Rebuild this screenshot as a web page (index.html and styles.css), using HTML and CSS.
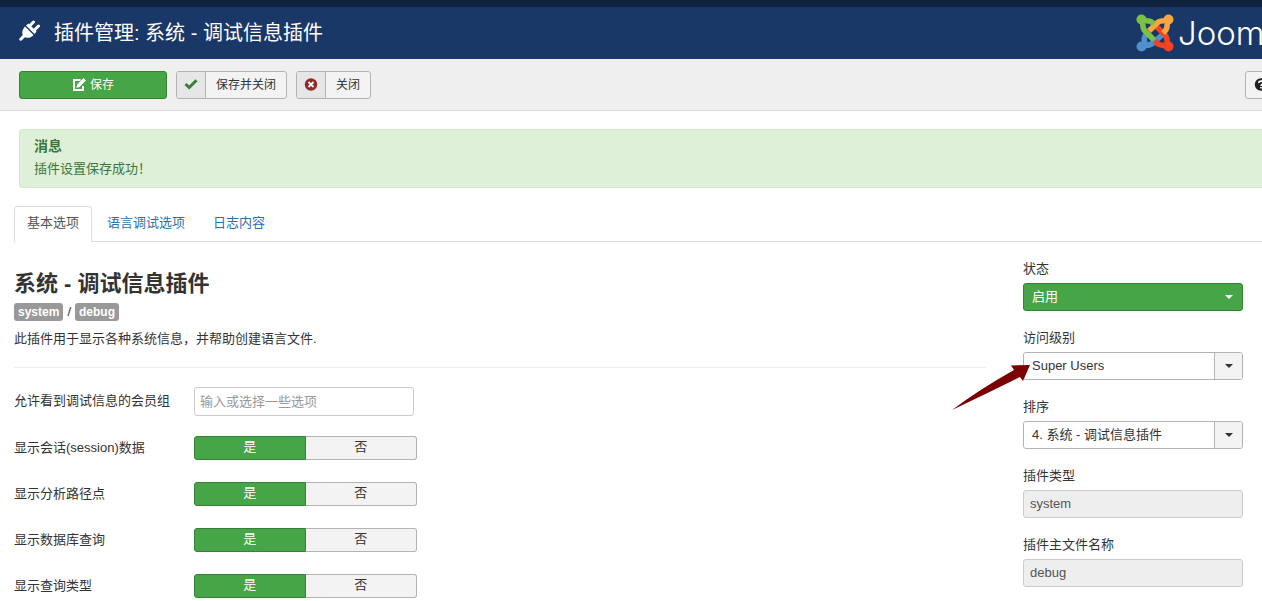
FILE: index.html
```html
<!DOCTYPE html>
<html lang="zh-CN">
<head>
<meta charset="utf-8">
<title>插件管理: 系统 - 调试信息插件</title>
<link rel="stylesheet" href="styles.css">
</head>
<body>
<div class="topbar"></div>
<header class="header">
  <svg class="plug" viewBox="0 0 22 22" aria-hidden="true">
    <path d="M7 6.500 15.500 15c-2 2.500-5.500 3.700-8.500 2.200L3.500 20.500c-1.200 1-3-.8-2-2L4.700 15C3.500 12 4.800 9 7 6.500Z" fill="#fff"/>
    <path d="M8 5.500 10.500 3.500 18.500 11.500 16.500 14Z" fill="#fff"/>
    <path d="M12 5.500 15.500 2M16.500 10l4-4" stroke="#fff" stroke-width="3" stroke-linecap="round"/>
  </svg>
  <h1 class="page-title">插件管理: 系统 - 调试信息插件</h1>
  <div class="brand">
    <svg class="brand-mark" viewBox="0 0 38 38" aria-hidden="true">
      <g fill="none" stroke-width="5.600">
        <path d="M6 31 9 29Q7 24 10 21l2-2M7 31q7 1 10-2l9-8" stroke="#5091cd"/>
        <path d="M31 32q1-8-2-11l-9-9M32 31q-7 1-10-1l-3-3" stroke="#f44321"/>
        <path d="M31 6q1 8-2 11l-2 2M32 7q-8-1-11 2l-8 8" stroke="#f9a541"/>
        <path d="M7 6q-1 8 2 11l9 9M6 7q8-1 11 2l1 1" stroke="#7ac143"/>
      </g>
      <circle cx="5.500" cy="5.500" r="5" fill="#7ac143"/>
      <circle cx="32.500" cy="5.500" r="5" fill="#f9a541"/>
      <circle cx="5.500" cy="32.500" r="5" fill="#5091cd"/>
      <circle cx="32.500" cy="32.500" r="5" fill="#f44321"/>
    </svg>
    <span class="brand-name">Joomla!</span>
  </div>
</header>

<div class="toolbar">
  <button class="btn btn-save" type="button">
    <svg class="icon" viewBox="0 0 14 14" aria-hidden="true">
      <path d="M8.500 2H2v10h9V8" fill="none" stroke="#fff" stroke-width="2"/>
      <path d="M11.500 0 14 2.500 7.500 9 4.300 9.900 5.200 6.500Z" fill="#fff"/>
    </svg>保存</button>
  <button class="btn btn-split" type="button">
    <span class="btn-icon"><svg class="icon" viewBox="0 0 14 14" aria-hidden="true"><path d="M1.500 6 5.200 9.500 12.500 2.200" fill="none" stroke="#378137" stroke-width="3"/></svg></span>
    <span class="btn-text">保存并关闭</span>
  </button>
  <button class="btn btn-split" type="button">
    <span class="btn-icon"><svg class="icon" viewBox="0 0 14 14" aria-hidden="true"><circle cx="7" cy="6.500" r="6.200" fill="#942a25"/><path d="m4.500 4 5 5m0-5-5 5" stroke="#fff" stroke-width="1.800"/></svg></span>
    <span class="btn-text">关闭</span>
  </button>
  <div class="help-slot">
    <button class="btn btn-help" type="button" aria-label="帮助">
      <svg class="icon" viewBox="0 0 14 14" aria-hidden="true"><circle cx="7" cy="6.500" r="6.200" fill="#222"/><path d="M4.800 5C4.800 2.300 9.300 2.500 9.200 5 9.200 6.500 7 6.500 7 8M7 9V10.500" fill="none" stroke="#fff" stroke-width="1.700"/></svg>
    </button>
  </div>
</div>

<section class="alert">
  <h4 class="alert-title">消息</h4>
  <p class="alert-text">插件设置保存成功！</p>
</section>

<nav class="tabs">
  <a class="tab tab-active" href="#basic">基本选项</a>
  <a class="tab" href="#language">语言调试选项</a>
  <a class="tab" href="#logging">日志内容</a>
</nav>

<main class="content">
  <section class="main-column">
    <h2 class="plugin-name">系统 - 调试信息插件</h2>
    <div class="badges"><span class="badge">system</span><span>/</span><span class="badge">debug</span></div>
    <p class="description">此插件用于显示各种系统信息，并帮助创建语言文件.</p>
    <hr class="rule">
    <div class="options">
      <div class="option">
        <label class="option-label label-tall" for="groups">允许看到调试信息的会员组</label>
        <input class="field groups" id="groups" type="text" placeholder="输入或选择一些选项">
      </div>
      <div class="option" role="radiogroup" aria-labelledby="l-session">
        <span class="option-label" id="l-session">显示会话(session)数据</span>
        <div class="switch">
          <label class="choice"><input type="radio" name="session" checked><span>是</span></label>
          <label class="choice"><input type="radio" name="session"><span>否</span></label>
        </div>
      </div>
      <div class="option" role="radiogroup" aria-labelledby="l-profile">
        <span class="option-label" id="l-profile">显示分析路径点</span>
        <div class="switch">
          <label class="choice"><input type="radio" name="profile" checked><span>是</span></label>
          <label class="choice"><input type="radio" name="profile"><span>否</span></label>
        </div>
      </div>
      <div class="option" role="radiogroup" aria-labelledby="l-queries">
        <span class="option-label" id="l-queries">显示数据库查询</span>
        <div class="switch">
          <label class="choice"><input type="radio" name="queries" checked><span>是</span></label>
          <label class="choice"><input type="radio" name="queries"><span>否</span></label>
        </div>
      </div>
      <div class="option" role="radiogroup" aria-labelledby="l-types">
        <span class="option-label" id="l-types">显示查询类型</span>
        <div class="switch">
          <label class="choice"><input type="radio" name="types" checked><span>是</span></label>
          <label class="choice"><input type="radio" name="types"><span>否</span></label>
        </div>
      </div>
    </div>
  </section>

  <aside class="side-column">
    <div class="side-field">
      <label for="status">状态</label>
      <div class="select select-green"><select id="status"><option>启用</option></select><span class="caret"></span></div>
    </div>
    <div class="side-field">
      <label for="access">访问级别</label>
      <div class="select">
        <select id="access"><option>Super Users</option></select><span class="caret"></span>
        <svg class="pointer" viewBox="0 0 78 48" aria-hidden="true"><path d="M78 2 59 2.500 62 7 Q28 26 0 47 Q34 31 68 14L71 18Z" fill="#7b0005"/></svg>
      </div>
    </div>
    <div class="side-field">
      <label for="ordering">排序</label>
      <div class="select"><select id="ordering"><option>4. 系统 - 调试信息插件</option></select><span class="caret"></span></div>
    </div>
    <div class="side-field">
      <label for="folder">插件类型</label>
      <input class="field readonly" id="folder" type="text" value="system" readonly>
    </div>
    <div class="side-field">
      <label for="element">插件主文件名称</label>
      <input class="field readonly" id="element" type="text" value="debug" readonly>
    </div>
  </aside>
</main>
</body>
</html>
```

FILE: styles.css
```css
* { box-sizing: border-box; }

body {
  margin: 0;
  overflow: hidden;
  background: #fff;
  color: #333;
  font: 13px/18px "Liberation Sans", "Noto Sans CJK SC", sans-serif;
}

h1, h2, h4, p { margin: 0; }
button, input, select { font: inherit; color: inherit; }

.topbar { height: 7px; background: #10223e; }

.header {
  display: flex;
  align-items: center;
  height: 52px;
  padding-left: 18px;
  background: #1a3867;
  color: #fff;
}
.plug { width: 22px; height: 22px; margin: 0 14px 4px 0; }
.page-title { flex: 1; font-size: 20px; line-height: 28px; font-weight: 400; }
.brand { display: flex; align-items: center; gap: 4px; width: 126px; overflow: hidden; }
.brand-mark { flex: none; width: 38px; height: 38px; }
.brand-name { font: 300 33px/40px Inter, sans-serif; }

.toolbar {
  display: flex;
  gap: 9px;
  padding: 12px 0 11px 19px;
  background: #efefef;
  border-bottom: 1px solid #d8d8d8;
}
.btn {
  display: flex;
  align-items: center;
  height: 28px;
  margin: 0;
  padding: 0;
  border: 1px solid #b3b3b3;
  border-radius: 3px;
  background: #f3f3f3;
  font-size: 12px;
  overflow: hidden;
}
.icon { width: 14px; height: 14px; }
.btn-save {
  justify-content: center;
  gap: 4px;
  width: 148px;
  border-color: #378137;
  background: #46a546;
  color: #fff;
}
.btn-icon {
  display: flex;
  align-items: center;
  justify-content: center;
  width: 29px;
  height: 26px;
  border-right: 1px solid #b3b3b3;
  background: #e6e6e6;
}
.btn-text { padding: 0 10px; }
.help-slot { width: 17px; margin-left: auto; overflow: hidden; }
.btn-help { width: 70px; padding-left: 8px; }

.alert {
  margin: 18px 0 18px 19px;
  padding: 7px 14px 9px;
  border: 1px solid #d0e9c6;
  border-right: 0;
  border-radius: 4px 0 0 4px;
  background: #dff0d8;
  color: #3c763d;
}
.alert-title { margin-bottom: 5px; font-size: 14px; line-height: 18px; }

.tabs { display: flex; gap: 2px; margin-left: 14px; border-bottom: 1px solid #ddd; }
.tab {
  padding: 7px 12px 9px;
  border: 1px solid transparent;
  border-bottom: 0;
  border-radius: 4px 4px 0 0;
  color: #3071a9;
  text-decoration: none;
}
.tab-active { margin-bottom: -1px; border-color: #ddd; background: #fff; color: #555; }

.content { display: flex; gap: 37px; padding: 18px 19px 0 14px; }
.main-column { flex: 1; padding-top: 10px; }
.plugin-name { font-size: 22px; line-height: 28px; }
.badges { display: flex; gap: 4px; margin-top: 5px; }
.badge {
  padding: 0 4px;
  border-radius: 3px;
  background: #999;
  color: #fff;
  font-size: 12px;
  font-weight: 700;
}
.description { margin-top: 9px; }
.rule { margin: 19px 0; border: 0; border-top: 1px solid #eee; }

.options { display: flex; flex-direction: column; gap: 20px; }
.option { display: flex; align-items: flex-start; min-height: 26px; }
.option-label { width: 180px; padding-top: 3px; }
.label-tall { padding-top: 5px; }
.field {
  width: 220px;
  height: 28px;
  padding: 0 6px;
  border: 1px solid #ccc;
  border-radius: 3px;
  background: #fff;
  color: #555;
}
.groups { height: 29px; padding: 0 5px; }
.groups::placeholder { color: #999; opacity: 1; }
.switch { display: flex; width: 223px; height: 24px; }
.choice { position: relative; display: grid; flex: 1; cursor: pointer; }
.choice input { position: absolute; inset: 0; width: 100%; height: 100%; margin: 0; opacity: 0; }
.choice span {
  border: 1px solid #b3b3b3;
  border-left: 0;
  border-radius: 0 3px 3px 0;
  background: #f3f3f3;
  line-height: 20px;
  text-align: center;
}
.choice input:checked + span {
  border: 1px solid #378137;
  border-radius: 3px 0 0 3px;
  background: #46a546;
  color: #fff;
}

.side-column { display: flex; flex-direction: column; gap: 18px; width: 220px; }
.side-field { display: flex; flex-direction: column; gap: 5px; }
.select {
  position: relative;
  display: grid;
  grid-template-columns: 1fr 28px;
  height: 28px;
  border: 1px solid #b3b3b3;
  border-radius: 3px;
}
.select select {
  grid-area: 1 / 1 / 2 / 3;
  padding: 0 36px 1px 8px;
  border: 0;
  border-radius: 3px;
  background: #fff;
  appearance: none;
}
.caret {
  grid-area: 1 / 2;
  display: grid;
  place-items: center;
  z-index: 1;
  border-left: 1px solid #b3b3b3;
  background: #f3f3f3;
  border-radius: 0 3px 3px 0;
  pointer-events: none;
}
.caret::before {
  content: "";
  border: 4px solid transparent;
  border-top-color: #333;
  border-bottom: 0;
}
.select-green { border-color: #378137; background: #46a546; }
.select-green select { background: #46a546; color: #fff; }
.select-green .caret { border-left-color: transparent; background: none; }
.select-green .caret::before { border-top-color: #fff; }
.pointer {
  position: absolute;
  z-index: 2;
  top: 10px;
  left: -72px;
  width: 78px;
  height: 48px;
  pointer-events: none;
}
.readonly { padding-bottom: 2px; background: #eee; }
```
